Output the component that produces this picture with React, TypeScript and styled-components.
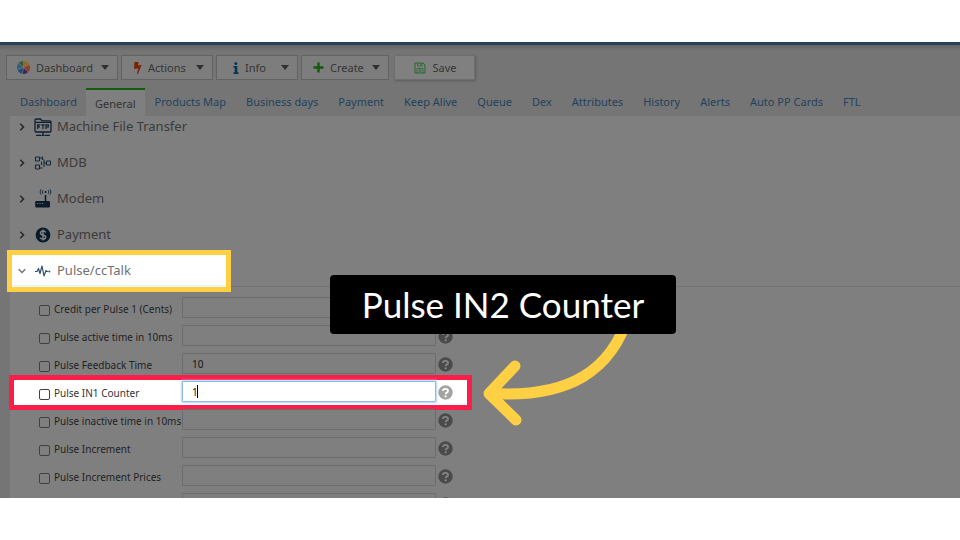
import React, { useState } from "react";
import styled, { createGlobalStyle, css } from "styled-components";

const GlobalStyle = createGlobalStyle`
  *, *::before, *::after { box-sizing: border-box; }
  body {
    margin: 0;
    background: #fff;
    font-family: "Noto Sans", "Open Sans", sans-serif;
    font-size: 11px;
  }
  button, input { font: inherit; }
`;

const Page = styled.div`
  display: flex;
  flex-direction: column;
  height: 100vh;
  padding: 42px 0;
  position: relative;
`;

const Screen = styled.main`
  flex: 1;
  min-height: 0;
  display: flex;
  flex-direction: column;
  overflow: hidden;
  background: #757575;
  border-top: 3px solid #24425c;
`;

const Toolbar = styled.div`
  display: flex;
  gap: 3px;
  padding: 10px 6px 8px;
  background: linear-gradient(#666, #757575 6px);
`;

const ToolButton = styled.button<{ $raised?: boolean; $width: number; $indent?: number }>`
  display: flex;
  align-items: center;
  width: ${(p) => p.$width}px;
  height: 25px;
  padding: 0 8px 0 ${(p) => p.$indent ?? 10}px;
  gap: 6px;
  border: 1px solid #636363;
  background: #7d7d7d;
  color: #353535;
  line-height: 16px;
  white-space: nowrap;
  ${(p) =>
    p.$raised &&
    css`
      justify-content: center;
      margin-left: 2px;
      border-color: #6e6e6e;
      background: #808080;
      box-shadow: 1px 1px 2px #5c5c5c;
    `}
`;

const Caret = styled.span`
  margin-left: auto;
  border: 4px solid transparent;
  border-top: 5px solid #303030;
  border-bottom: 0;
`;

const Tabs = styled.nav`
  display: flex;
  height: 28px;
  padding-left: 10px;
`;

const Tab = styled.a<{ $active?: boolean }>`
  padding: 5px 10px 0;
  line-height: 18px;
  color: #23425d;
  text-decoration: none;
  white-space: nowrap;
  ${(p) =>
    p.$active &&
    css`
      padding: 5px 9px 0;
      margin-left: -1px;
      border-top: 2px solid #125c12;
      background: #7f7f7f;
      color: #333;
    `}
`;

const ScrollArea = styled.div`
  flex: 1;
  min-height: 0;
  overflow: hidden;
  padding-left: 10px;
`;

const Panel = styled.div`
  min-height: 100%;
  background: #7f7f7f;
`;

const Sections = styled.div`
  display: flex;
  flex-direction: column;
  margin-top: -8px;
`;

const Section = styled.section<{ $open?: boolean }>`
  position: relative;
  height: 36px;
  ${(p) =>
    p.$open &&
    css`
      height: 35px;
      border-bottom: 1px solid #737373;
    `}
`;

const SectionButton = styled.button`
  position: relative;
  display: flex;
  align-items: center;
  width: 100%;
  height: 36px;
  padding: 0 0 0 8px;
  border: 0;
  background: none;
  color: #3b3b3b;
  font-size: 13px;
  line-height: 20px;
  text-align: left;
`;

const SectionTitle = styled.span<{ $lit?: boolean }>`
  margin-left: 5px;
  color: ${(p) => (p.$lit ? "#717171" : "#3b3b3b")};
`;

const SectionIcon = styled.span`
  display: flex;
  align-items: center;
  gap: 8px;
  margin-top: 2px;
`;

const YellowFrame = styled.div`
  position: absolute;
  top: -2px;
  left: -3px;
  width: 224px;
  height: 42px;
  border: 5px solid #ffd043;
  background: linear-gradient(#fff 30px, #ececec 30px, #fff 32px);
`;

const Fields = styled.div`
  display: grid;
  grid-auto-rows: 21px;
  row-gap: 7px;
  padding: 10px 0 0 29px;
`;

const Field = styled.div`
  position: relative;
  display: grid;
  grid-template-columns: 143px 254px 20px;
  align-items: center;
`;

const RedFrame = styled.div`
  position: absolute;
  top: -6px;
  left: -30px;
  width: 463px;
  height: 35px;
  border: 5px solid #fb1e4b;
  background: #fff;
`;

const CheckLabel = styled.label<{ $lit?: boolean }>`
  position: relative;
  display: flex;
  align-items: center;
  gap: 4px;
  padding-top: 3px;
  font-size: 10px;
  line-height: 16px;
  white-space: nowrap;
  color: ${(p) => (p.$lit ? "#333" : "#1f1f1f")};
`;

const Check = styled.input`
  appearance: none;
  flex: none;
  width: 11px;
  height: 11px;
  margin: 2px 0 0;
  border: 1px solid #404040;
  border-radius: 2px;
  &:checked { background: #24425c; }
`;

const InputWrap = styled.div`
  position: relative;
`;

const TextInput = styled.input<{ $lit?: boolean }>`
  display: block;
  width: 100%;
  height: 21px;
  padding: 0 9px;
  border: 1px solid #6c6c6c;
  border-radius: 1px;
  background: #7f7f7f;
  color: #151515;
  font-size: 10px;
  outline: 0;
  ${(p) =>
    p.$lit &&
    css`
      border-color: #8dbbe9;
      background: #fff;
      box-shadow: 0 0 2px 1px #b5d5f5;
    `}
`;

const TextCursor = styled.span`
  position: absolute;
  top: 4px;
  left: 15px;
  width: 1px;
  height: 13px;
  background: #000;
`;

const HelpButton = styled.button<{ $lit?: boolean }>`
  position: relative;
  display: flex;
  padding: 2px 0 0 2px;
  border: 0;
  background: none;
  color: ${(p) => (p.$lit ? "#a3a3a3" : "#4a4a4a")};
  --mark: ${(p) => (p.$lit ? "#fff" : "#858585")};
`;

const Callout = styled.div`
  position: absolute;
  top: 275px;
  left: 330px;
  width: 346px;
  height: 59px;
  border-radius: 4px;
  background: #000;
  color: #fff;
  font-family: Lato, sans-serif;
  font-size: 35px;
  line-height: 58px;
  text-align: center;
  white-space: nowrap;
`;

const ArrowDrawing = styled.svg`
  position: absolute;
  top: 300px;
  left: 470px;
  pointer-events: none;
`;

const PieIcon = () => (
  <svg width="13" height="13" viewBox="0 0 13 13" aria-hidden="true">
    <path d="M6.5 6.5V0A6.5 6.5 0 0 1 12.2 3.5Z" fill="#8f6a20" />
    <path d="M6.5 6.5 12.2 3.5A6.5 6.5 0 0 1 11.2 11Z" fill="#91402b" />
    <path d="M6.5 6.5 11.2 11A6.5 6.5 0 0 1 5.5 12.9Z" fill="#3d285c" />
    <path d="M6.5 6.5 5.5 12.9A6.5 6.5 0 0 1 .5 8.8Z" fill="#244a72" />
    <path d="M6.5 6.5.5 8.8A6.5 6.5 0 0 1 1.5 2.2Z" fill="#32617a" />
    <path d="M6.5 6.5 1.5 2.2A6.5 6.5 0 0 1 6.5 0Z" fill="#365c37" />
    <path d="M6.5 6.5V0M6.5 6.5l5.7-3M6.5 6.5l4.7 4.5M6.5 6.5l-1 6.4M6.5 6.5l-6 2.3M6.5 6.5l-5-4.3" stroke="#858585" strokeWidth=".5" />
  </svg>
);

const BoltIcon = () => (
  <svg width="9" height="12" viewBox="0 0 9 12" aria-hidden="true">
    <path d="M1.4 0H5.6L5 3.4 8.6 2.7 5 12H4L5.2 6.2 1 7.1Z" fill="#7a2206" />
  </svg>
);

const InfoIcon = () => (
  <svg width="6" height="12" viewBox="0 0 6 12" aria-hidden="true">
    <circle cx="2.9" cy="1.5" r="1.5" fill="#0b3450" />
    <path d="M.5 4H4.3V10.2H5.5V12H.5V10.2H1.7V5.8H.5Z" fill="#0b3450" />
  </svg>
);

const PlusIcon = () => (
  <svg width="11" height="11" viewBox="0 0 11 11" aria-hidden="true">
    <path d="M5.5.5v10M.5 5.500h10" stroke="#12590f" strokeWidth="2.4" />
  </svg>
);

const SaveIcon = () => (
  <svg width="12" height="12" viewBox="0 0 12 12" fill="none" stroke="#246b28" aria-hidden="true">
    <path d="M1 1H9L11 3V11H1Z" strokeLinejoin="round" />
    <path d="M3.5 1V4H8V1M3 11V6.5H9V11M6.6 1.5v1.8" strokeWidth=".8" />
    <circle cx="6" cy="8.6" r="1" strokeWidth=".8" />
  </svg>
);

const Chevron = ({ open }: { open?: boolean }) => (
  <svg width="8" height="8" viewBox="0 0 8 8" fill="none" stroke={open ? "#777" : "#2a2a2a"} strokeWidth="1.6" aria-hidden="true">
    <path d={open ? "M.7 2.3 4 5.500 7.300 2.300" : "M2.300.7 5.500 4 2.300 7.300"} />
  </svg>
);

const FtpIcon = () => (
  <svg width="18" height="19" viewBox="0 0 18 19" fill="none" stroke="#0e2030" aria-hidden="true">
    <path d="M1 13V2.2Q1 1 2.2 1H6.4L8 2.8H15.800Q17 2.8 17 4V13Q17 14 16 14H2Q1 14 1 13Z" strokeWidth="1.3" />
    <path d="M1 4.300H17M9 14v3M2 17.300h5M11 17.300h5M7.400 17.300h3.200" strokeWidth="1.2" />
    <path d="M3.700 11V6.800H6.300M3.700 8.800H6M7.300 6.800H10.700M9 6.800V11M12 11V6.800H14.300V9H12" strokeWidth="1.2" />
  </svg>
);

const MdbIcon = () => (
  <svg width="18" height="16" viewBox="0 0 18 16" fill="none" stroke="#16293a" strokeWidth="1.1" aria-hidden="true">
    <rect x="1.500" y="2" width="4" height="4" rx=".5" />
    <rect x="1.500" y="10" width="4" height="4" rx=".5" />
    <rect x="12.500" y="6" width="4" height="4" rx=".5" />
    <path d="M5.500 3H8M5.500 13H8.500M8.500 1.500V5M7.500 6.500V10M10 4.500V12M10 8h2.500" />
  </svg>
);

const ModemIcon = () => (
  <svg width="18" height="20" viewBox="0 0 18 20" aria-hidden="true">
    <path d="M2.400 12H14.800Q16 12 16 13.200V17Q16 18.500 14.800 18.500H2.400Q1.200 18.500 1.200 17.200V13.200Q1.200 12 2.400 12Z" fill="#081b2a" />
    <path d="M11.500 6v7" stroke="#081b2a" strokeWidth="1.500" />
    <path d="M3 14.500h1.300M5.500 14.500h1.300M8 14.500h1.300" stroke="#6a7075" />
    <circle cx="11.500" cy="3" r="1" fill="#081b2a" />
    <path d="M8.800 1.200Q7.600 3 8.800 4.800M7 .4Q5 3 7 5.600M14.200 1.200Q15.400 3 14.200 4.800M16 .4Q18 3 16 5.600" fill="none" stroke="#16293a" strokeWidth=".9" />
  </svg>
);

const PaymentIcon = () => (
  <svg width="18" height="16" viewBox="0 0 18 16" aria-hidden="true">
    <circle cx="9" cy="8" r="7.400" fill="#081b2a" />
    <path d="M11.700 5.400Q11.200 4 9 4T6.400 5.900Q6.400 7.500 9 8T11.700 10.100Q11.600 12 9 12T6.200 10.500M9 2.600V13.400" fill="none" stroke="#858585" strokeWidth="1.400" />
  </svg>
);

const PulseIcon = () => (
  <svg width="18" height="14" viewBox="0 0 18 14" fill="none" stroke="#2f4f6c" strokeWidth="1.200" strokeLinejoin="round" aria-hidden="true">
    <path d="M1 7.500H3L4.500 4.500 6 9.500 8 2 10 12 12 6.500 13 7.500H14" />
    <circle cx="15.300" cy="7.500" r=".7" fill="#2f4f6c" strokeWidth=".6" />
  </svg>
);

const HelpIcon = () => (
  <svg width="15" height="15" viewBox="0 0 15 15" aria-hidden="true">
    <circle cx="7.500" cy="7.500" r="7.200" fill="currentColor" />
    <path d="M5 6Q5 3.800 7.500 3.800T10 5.900Q10 7 8.700 7.600 7.600 8.100 7.600 9.200" fill="none" stroke="var(--mark)" strokeWidth="1.800" />
    <circle cx="7.600" cy="11.300" r="1.100" fill="var(--mark)" />
  </svg>
);

const tools = [
  { label: "Dashboard", icon: <PieIcon />, width: 112, indent: 10 },
  { label: "Actions", icon: <BoltIcon />, width: 92, indent: 11 },
  { label: "Info", icon: <InfoIcon />, width: 82, indent: 16 },
  { label: "Create", icon: <PlusIcon />, width: 88, indent: 11 },
];

const tabs = [
  "Dashboard", "General", "Products Map", "Business days", "Payment", "Keep Alive",
  "Queue", "Dex", "Attributes", "History", "Alerts", "Auto PP Cards", "FTL",
];

const sections = [
  { title: "Machine File Transfer", icon: <FtpIcon /> },
  { title: "MDB", icon: <MdbIcon /> },
  { title: "Modem", icon: <ModemIcon /> },
  { title: "Payment", icon: <PaymentIcon /> },
  { title: "Pulse/ccTalk", icon: <PulseIcon />, open: true },
];

const fields = [
  { id: "credit", label: "Credit per Pulse 1 (Cents)", value: "" },
  { id: "active", label: "Pulse active time in 10ms", value: "" },
  { id: "feedback", label: "Pulse Feedback Time", value: "10" },
  { id: "in1", label: "Pulse IN1 Counter", value: "1", lit: true },
  { id: "inactive", label: "Pulse inactive time in 10ms", value: "" },
  { id: "increment", label: "Pulse Increment", value: "" },
  { id: "prices", label: "Pulse Increment Prices", value: "" },
  { id: "extra", label: "", value: "" },
];

type FieldProps = { id: string; label: string; value: string; lit?: boolean };

function FieldRow({ id, label, value, lit }: FieldProps) {
  const [text, setText] = useState(value);
  return (
    <Field>
      {lit && <RedFrame />}
      <CheckLabel $lit={lit}>
        <Check type="checkbox" name={id} />
        {label}
      </CheckLabel>
      <InputWrap>
        <TextInput $lit={lit} aria-label={label || id} value={text} onChange={(e) => setText(e.target.value)} />
        {lit && <TextCursor />}
      </InputWrap>
      <HelpButton type="button" $lit={lit} aria-label={`Help: ${label || id}`}>
        <HelpIcon />
      </HelpButton>
    </Field>
  );
}

export default function App() {
  return (
    <Page>
      <GlobalStyle />
      <Screen>
        <Toolbar>
          {tools.map((t) => (
            <ToolButton key={t.label} type="button" $width={t.width} $indent={t.indent}>
              {t.icon}
              {t.label}
              <Caret />
            </ToolButton>
          ))}
          <ToolButton type="button" $raised $width={81}>
            <SaveIcon />
            Save
          </ToolButton>
        </Toolbar>
        <Tabs>
          {tabs.map((t) => (
            <Tab key={t} href="#" $active={t === "General"}>{t}</Tab>
          ))}
        </Tabs>
        <ScrollArea>
          <Panel>
            <Sections>
              {sections.map((s) => (
                <Section key={s.title} $open={s.open}>
                  {s.open && <YellowFrame />}
                  <SectionButton type="button" aria-expanded={!!s.open}>
                    <SectionIcon>
                      <Chevron open={s.open} />
                      {s.icon}
                    </SectionIcon>
                    <SectionTitle $lit={s.open}>{s.title}</SectionTitle>
                  </SectionButton>
                </Section>
              ))}
            </Sections>
            <Fields>
              {fields.map((f) => (
                <FieldRow key={f.id} {...f} />
              ))}
            </Fields>
          </Panel>
        </ScrollArea>
      </Screen>
      <ArrowDrawing width="180" height="130" viewBox="0 0 180 130" fill="none" stroke="#ffd043" strokeWidth="11" strokeLinecap="round" strokeLinejoin="round" aria-hidden="true">
        <path d="M159 14C142 70 100 98 22 93.500" />
        <path d="M45 66 19 93.500 46 120" />
      </ArrowDrawing>
      <Callout>Pulse IN2 Counter</Callout>
    </Page>
  );
}
